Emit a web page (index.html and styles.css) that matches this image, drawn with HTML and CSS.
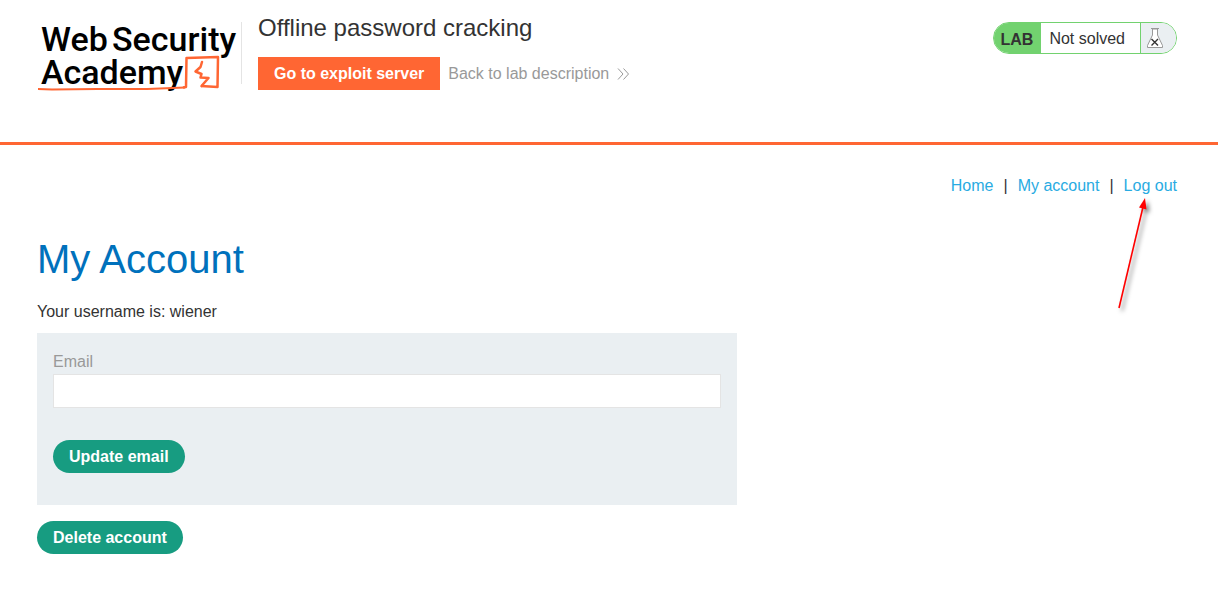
FILE: index.html
```html
<!DOCTYPE html>
<html lang="en">
<head>
  <meta charset="utf-8">
  <meta name="viewport" content="width=device-width, initial-scale=1">
  <title>Offline password cracking</title>
  <link rel="stylesheet" href="styles.css">
</head>
<body>
  <header class="lab-header">
    <svg class="logo" width="204" height="76" viewBox="0 0 204 76" role="img" aria-label="Web Security Academy">
      <g class="logo-text">
        <text x="4" y="35">Web</text>
        <text x="75" y="35">Security</text>
        <text x="4" y="68">Academy</text>
      </g>
      <path d="M1 73L15 73.500L60 73L110 73L148 71.500" fill="none" stroke="#ff6633" stroke-width="2"/>
      <path d="M146 71.500L149 71L149.500 42L181 41L180.500 71L164 70" fill="none" stroke="#ff6633" stroke-width="2.500" stroke-linejoin="round"/>
      <path d="M165 46L163.500 51L158.500 55.500L164.500 58L163.500 61.500L171.500 62L164.500 70" fill="none" stroke="#ff6633" stroke-width="2.500" stroke-linejoin="round" stroke-linecap="round"/>
    </svg>
    <div class="lab-title">
      <h2>Offline password cracking</h2>
      <div class="lab-actions">
        <a class="exploit-link" href="#exploit">Go to exploit server</a>
        <a class="back-link" href="#lab">Back to lab description
          <svg width="12" height="12" viewBox="0 0 12 12" aria-hidden="true"><path d="M1 0.500L6 6L1 11.500M6.500 0.500L11.500 6L6.500 11.500" fill="none" stroke="#999" stroke-width="1"/></svg>
        </a>
      </div>
    </div>
    <div class="lab-status">
      <span class="status-tag">LAB</span>
      <span class="status-text">Not solved</span>
      <span class="status-icon">
        <svg width="16" height="20" viewBox="0 0 16 20" aria-hidden="true">
          <path d="M5.500 1V7L0.500 17.500V19.500H15.500V17.500L10.500 7V1Z" fill="#fff" stroke="#999"/>
          <path d="M4 0.500H12" stroke="#999"/>
          <path d="M4.500 11L11 17.500M11 11L4.500 17.500" stroke="#333" stroke-width="1.400"/>
        </svg>
      </span>
    </div>
  </header>
  <main class="page">
    <nav class="top-links">
      <a href="#home">Home</a>
      <span>|</span>
      <a href="#account">My account</a>
      <span>|</span>
      <a href="#logout">Log out</a>
      <svg class="pointer" width="44" height="124" viewBox="0 0 44 124" aria-hidden="true">
        <path d="M7 114L31 13" fill="none" stroke="#f00" stroke-width="1.600"/>
        <path d="M33 4L27 13.500L34.500 15.500Z" fill="#f00"/>
      </svg>
    </nav>
    <h1>My Account</h1>
    <p>Your username is: wiener</p>
    <form class="email-form">
      <label for="email">Email</label>
      <input id="email" type="email">
      <button class="button" type="button">Update email</button>
    </form>
    <button class="button" type="button">Delete account</button>
  </main>
</body>
</html>
```
FILE: styles.css
```css
* {
  box-sizing: border-box;
}

body {
  margin: 0;
  background: #fff;
  color: #333;
  font: 16px/20px "Liberation Sans", Arial, sans-serif;
}

a {
  text-decoration: none;
}

.lab-header {
  display: flex;
  align-items: flex-start;
  padding: 16px 41px 50px 37px;
  border-bottom: 3px solid #ff6633;
}

.logo {
  flex: none;
  display: block;
  overflow: visible;
}

.logo-text {
  font: 500 34px Roboto, sans-serif;
  fill: #000;
}

.lab-title {
  flex: 1;
  display: flex;
  flex-direction: column;
  position: relative;
  padding-left: 17px;
}

.lab-title::before {
  content: "";
  position: absolute;
  left: 0;
  top: 6px;
  width: 1px;
  height: 62px;
  background: #e4e4e4;
}

.lab-title h2 {
  margin: 0 0 17px;
  font-size: 24px;
  font-weight: 400;
  line-height: 24px;
}

.lab-actions {
  display: flex;
  align-items: center;
  gap: 8px;
}

.exploit-link {
  padding: 7px 16px 6px;
  background: #ff6633;
  color: #fff;
  font-weight: 700;
}

.back-link {
  display: flex;
  align-items: center;
  gap: 8px;
  color: #999;
}

.lab-status {
  display: flex;
  flex: none;
  height: 32px;
  margin-top: 6px;
  border: 1px solid #72d26f;
  border-radius: 16px;
  overflow: hidden;
  line-height: 30px;
}

.status-tag {
  padding: 2px 8px 0 7px;
  background: #72d26f;
  font-weight: 700;
}

.status-text {
  padding: 1px 15px 0 8px;
}

.status-icon {
  display: flex;
  align-items: center;
  width: 36px;
  padding-left: 6px;
  border-left: 1px solid #72d26f;
  background: #eaeff2;
}

.page {
  padding: 31px 41px 37px 37px;
}

.top-links {
  display: flex;
  justify-content: flex-end;
  gap: 10px;
  position: relative;
}

.top-links a {
  color: #29abe2;
}

.pointer {
  position: absolute;
  top: 18px;
  right: 21px;
  pointer-events: none;
  filter: drop-shadow(3px 3px 2px rgba(0, 0, 0, 0.5));
}

h1 {
  margin: 40px 0 20px;
  color: #0071bc;
  font-size: 40px;
  font-weight: 400;
  line-height: 46px;
}

p {
  margin: 0 0 11px;
}

.email-form {
  max-width: 700px;
  margin-bottom: 16px;
  padding: 19px 16px 32px;
  background: #eaeff2;
}

.email-form label {
  display: block;
  margin-bottom: 2px;
  color: #999;
}

.email-form input {
  display: block;
  width: 100%;
  height: 34px;
  margin-bottom: 32px;
  padding: 0 8px;
  border: 1px solid #e4e4e4;
  border-radius: 0;
  background: #fff;
  font: inherit;
}

.button {
  display: block;
  padding: 7px 16px 6px;
  border: 0;
  border-radius: 17px;
  background: #179c81;
  color: #fff;
  font: inherit;
  font-weight: 700;
}
```
